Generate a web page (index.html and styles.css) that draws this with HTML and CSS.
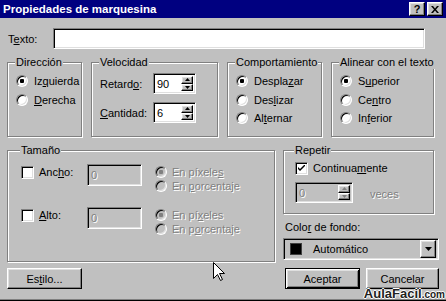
FILE: index.html
```html
<!DOCTYPE html>
<html lang="es">
<head>
<meta charset="UTF-8">
<title>Propiedades de marquesina</title>
<link rel="stylesheet" href="styles.css">
</head>
<body>
<div class="dialog">
  <div class="titlebar">
    <span class="title">Propiedades de marquesina</span>
    <span class="tbtns">
      <span class="tbtn raised help">?</span>
      <span class="tbtn raised close"><svg width="8" height="7" viewBox="0 0 8 7"><path d="M0 0h2l2 2.5L6 0h2L5 3.5 8 7H6L4 4.5 2 7H0l3-3.5z"/></svg></span>
    </span>
  </div>

  <div class="content">
    <div class="row-text">
      <label class="lbl-text">T<u>e</u>xto:</label>
      <div class="field sunken text-field"></div>
    </div>

    <div class="groups">
      <fieldset class="group g-dir">
        <legend>Dirección</legend>
        <div class="opt"><span class="radio on"></span><span>Iz<u>q</u>uierda</span></div>
        <div class="opt"><span class="radio"></span><span><u>D</u>erecha</span></div>
      </fieldset>
      <fieldset class="group g-vel">
        <legend>Velocidad</legend>
        <div class="spin-row">
          <span class="spin-lbl">Retard<u>o</u>:</span>
          <div class="spin sunken">
            <span class="spin-val">90</span>
            <span class="ud">
              <span class="ud-btn raised"><svg width="5" height="3" viewBox="0 0 5 3"><path d="M2.5 0L5 3H0z"/></svg></span>
              <span class="ud-btn raised"><svg width="5" height="3" viewBox="0 0 5 3"><path d="M0 0h5L2.5 3z"/></svg></span>
            </span>
          </div>
        </div>
        <div class="spin-row">
          <span class="spin-lbl"><u>C</u>antidad:</span>
          <div class="spin sunken">
            <span class="spin-val">6</span>
            <span class="ud">
              <span class="ud-btn raised"><svg width="5" height="3" viewBox="0 0 5 3"><path d="M2.5 0L5 3H0z"/></svg></span>
              <span class="ud-btn raised"><svg width="5" height="3" viewBox="0 0 5 3"><path d="M0 0h5L2.5 3z"/></svg></span>
            </span>
          </div>
        </div>
      </fieldset>
      <fieldset class="group g-comp">
        <legend>Comportamiento</legend>
        <div class="opt"><span class="radio on"></span><span>Despla<u>z</u>ar</span></div>
        <div class="opt"><span class="radio"></span><span>Des<u>l</u>izar</span></div>
        <div class="opt"><span class="radio"></span><span>Al<u>t</u>ernar</span></div>
      </fieldset>
      <fieldset class="group g-align">
        <legend>Alinear con el texto</legend>
        <div class="opt"><span class="radio on"></span><span>S<u>u</u>perior</span></div>
        <div class="opt"><span class="radio"></span><span>Ce<u>n</u>tro</span></div>
        <div class="opt"><span class="radio"></span><span>In<u>f</u>erior</span></div>
      </fieldset>
    </div>

    <div class="lower">
      <fieldset class="group g-size">
        <legend>Tamaño</legend>
        <div class="size-row">
          <div class="chk-line"><span class="check"></span><span class="chk-lbl">Anc<u>h</u>o:</span></div>
          <div class="field sunken off-field"><span class="dim">0</span></div>
          <div class="units">
            <div class="unit"><span class="radio dis on"></span><span class="dim">En píxele<u>s</u></span></div>
            <div class="unit"><span class="radio dis"></span><span class="dim">En <u>p</u>orcentaje</span></div>
          </div>
        </div>
        <div class="size-row">
          <div class="chk-line"><span class="check"></span><span class="chk-lbl"><u>A</u>lto:</span></div>
          <div class="field sunken off-field"><span class="dim">0</span></div>
          <div class="units">
            <div class="unit"><span class="radio dis on"></span><span class="dim">En pí<u>x</u>eles</span></div>
            <div class="unit"><span class="radio dis"></span><span class="dim">En p<u>o</u>rcentaje</span></div>
          </div>
        </div>
      </fieldset>

      <div class="side">
        <fieldset class="group g-rep">
          <legend>Repetir</legend>
          <div class="chk-line rep-chk">
            <span class="check on"><svg width="7" height="7" viewBox="0 0 7 7"><path d="M0 2l2 2 5-5v2L2 6 0 4z"/></svg></span>
            <span class="chk-lbl">Continua<u>m</u>ente</span>
          </div>
          <div class="rep-row">
            <div class="spin sunken spin-off">
              <span class="spin-val dim">0</span>
              <span class="ud">
                <span class="ud-btn raised"><svg width="5" height="3" viewBox="0 0 5 3"><path d="M2.5 0L5 3H0z"/></svg></span>
                <span class="ud-btn raised"><svg width="5" height="3" viewBox="0 0 5 3"><path d="M0 0h5L2.5 3z"/></svg></span>
              </span>
            </div>
            <span class="dim veces">veces</span>
          </div>
        </fieldset>
        <div class="color-lbl">Colo<u>r</u> de fondo:</div>
        <div class="combo sunken">
          <span class="swatch"></span>
          <span class="combo-val">Automático</span>
          <span class="combo-btn raised"><svg width="7" height="4" viewBox="0 0 7 4"><path d="M0 0h7L3.5 4z"/></svg></span>
        </div>
      </div>
    </div>

    <div class="buttons">
      <button class="btn raised">Es<u>t</u>ilo...</button>
      <button class="btn default">Aceptar</button>
      <button class="btn raised cancel">Cancelar</button>
    </div>
  </div>

  <svg class="cursor" width="12" height="20" viewBox="0 0 12 20"><path d="M0.5 0.5V16.5L4.5 12.5L7.5 18.5L9.5 17.5L6.5 11.5H11.5Z" fill="#fff" stroke="#000"/></svg>
  <div class="mark">AulaFacil<span class="mark-com">.com</span></div>
</div>
</body>
</html>
```

FILE: styles.css
```css
body {
    margin: 0;
    background: #c0c0c0;
    font: 11px "Liberation Sans", Arial, sans-serif;
    color: #000;
}
u {
    text-underline-offset: 1px;
}
.dialog {
    position: relative;
    width: 446px;
    height: 301px;
    background: #c0c0c0;
    overflow: hidden;
    box-shadow: inset 0 -1px #000, inset 0 -2px #808080;
}
.raised {
    box-sizing: border-box;
    background: #c0c0c0;
    border: 1px solid;
    border-color: #fff #000 #000 #fff;
    box-shadow: inset -1px -1px #808080, inset 1px 1px #dfdfdf;
}
.sunken {
    box-sizing: border-box;
    border: 1px solid;
    border-color: #808080 #fff #fff #808080;
    box-shadow: inset 1px 1px #000, inset -1px -1px #dfdfdf;
}
.dim {
    color: #808080;
    text-shadow: 1px 1px #fff;
}

/* title bar */
.titlebar {
    height: 18px;
    background: #000080;
    display: flex;
    align-items: center;
    justify-content: space-between;
    padding: 0 3px;
}
.title {
    color: #fff;
    font-weight: bold;
    font-size: 11.5px;
}
.tbtns {
    display: flex;
    gap: 2px;
}
.tbtn {
    width: 16px;
    height: 14px;
    display: flex;
    align-items: center;
    justify-content: center;
    font-weight: bold;
    font-size: 11px;
    line-height: 1;
}

.content {
    padding: 10px 7px 0 7px;
}

/* Texto row */
.row-text {
    display: flex;
    align-items: center;
    height: 21px;
}
.lbl-text {
    width: 45px;
    margin-left: 1px;
}
.field {
    height: 21px;
}
.text-field {
    width: 372px;
    background: #fff;
}

/* group boxes */
.group {
    box-sizing: border-box;
    margin: 0;
    min-width: 0;
    border: 1px solid #808080;
    box-shadow: inset 1px 1px #fff, 1px 1px #fff;
    padding: 3px 8px 0 8px;
}
.group legend {
    padding: 0 1px;
    margin-left: -1px;
    line-height: 13px;
    white-space: nowrap;
    background: #c0c0c0;
}
.groups {
    display: flex;
    gap: 9px;
    margin-top: 7px;
}
.groups .group {
    height: 81px;
}
.g-dir { width: 75px; }
.g-vel { width: 127px; padding-top: 4px; }
.g-comp { width: 95px; }
.g-align { width: 103px; padding-right: 0; }

.opt {
    display: flex;
    align-items: center;
    gap: 6px;
    height: 18.5px;
}
.radio {
    flex: none;
    box-sizing: border-box;
    width: 12px;
    height: 12px;
    border-radius: 50%;
    border: 1px solid;
    border-color: #808080 #fff #fff #808080;
    box-shadow: inset 1px 1px #000, inset -1px -1px #dfdfdf;
    background: #fff;
}
.radio.on {
    background: radial-gradient(circle, #000 0 2px, #fff 2.5px);
}
.radio.dis {
    background: #c0c0c0;
}
.radio.dis.on {
    background: radial-gradient(circle, #808080 0 2px, #c0c0c0 2.5px);
}

/* spinners */
.spin-row {
    display: flex;
    align-items: center;
    height: 21px;
    margin-bottom: 8px;
}
.spin-lbl {
    width: 53px;
}
.spin {
    display: flex;
    width: 43px;
    height: 21px;
    padding: 2px;
    background: #fff;
}
.spin-val {
    flex: 1;
    padding-left: 1px;
    line-height: 17px;
}
.ud {
    display: flex;
    flex-direction: column;
    width: 12px;
}
.ud-btn {
    height: 8.5px;
    display: flex;
    align-items: center;
    justify-content: center;
}
.spin-off {
    width: 58px;
    background: #c0c0c0;
}
.spin-off .ud-btn svg {
    fill: #808080;
}

/* lower part */
.lower {
    display: flex;
    gap: 8px;
    margin-top: 7px;
}
.g-size {
    width: 268px;
    height: 118px;
    padding: 7px 8px 0 13px;
}
.size-row {
    display: flex;
    align-items: flex-start;
    height: 43px;
}
.chk-line {
    display: flex;
    align-items: center;
    height: 14px;
    gap: 5px;
}
.size-row .chk-line {
    width: 66px;
    margin-top: 1px;
}
.check {
    flex: none;
    box-sizing: border-box;
    width: 13px;
    height: 13px;
    border: 1px solid;
    border-color: #808080 #fff #fff #808080;
    box-shadow: inset 1px 1px #000, inset -1px -1px #dfdfdf;
    background: #fff;
    display: flex;
    align-items: center;
    justify-content: center;
}
.off-field {
    width: 55px;
    height: 22px;
    padding: 2px 3px;
    line-height: 17px;
    background: #c0c0c0;
}
.units {
    margin-left: 13px;
    margin-top: 1px;
}
.unit {
    display: flex;
    align-items: center;
    gap: 5px;
    height: 14px;
}

.side {
    width: 156px;
}
.g-rep {
    width: 151px;
    height: 70px;
    padding: 4px 8px 0 11px;
}
.rep-row {
    display: flex;
    align-items: center;
    margin-top: 7px;
}
.veces {
    margin-left: 17px;
    margin-top: 3px;
}
.color-lbl {
    margin-top: 7px;
    line-height: 13px;
    padding-left: 2px;
}
.combo {
    display: flex;
    align-items: center;
    margin-top: 4px;
    height: 22px;
    padding: 2px;
    background: #c0c0c0;
}
.swatch {
    width: 10px;
    height: 10px;
    background: #000;
    border: 1px solid #404040;
    margin-left: 4px;
}
.combo-val {
    flex: 1;
    margin-left: 11px;
}
.combo-btn {
    width: 16px;
    height: 18px;
    display: flex;
    align-items: center;
    justify-content: center;
}

/* buttons */
.buttons {
    display: flex;
    margin-top: 6px;
}
.btn {
    width: 75px;
    height: 21px;
    padding: 0;
    font: inherit;
    color: #000;
}
.default {
    margin-left: auto;
    box-sizing: border-box;
    background: #c0c0c0;
    border: 1px solid #000;
    box-shadow: inset 1px 1px #fff, inset -1px -1px #000, inset 2px 2px #dfdfdf, inset -2px -2px #808080;
}
.cancel {
    width: 73px;
    margin-left: 6px;
}

/* overlays */
.cursor {
    position: absolute;
    left: 213px;
    top: 262px;
}
.mark {
    position: absolute;
    right: 1px;
    bottom: 0;
    line-height: 12px;
    font-weight: bold;
    font-size: 13px;
    color: #222;
    text-shadow: 1px 0 #fff, -1px 0 #fff, 0 1px #fff, 0 -1px #fff;
}
.mark-com {
    font-size: 10px;
}
```
